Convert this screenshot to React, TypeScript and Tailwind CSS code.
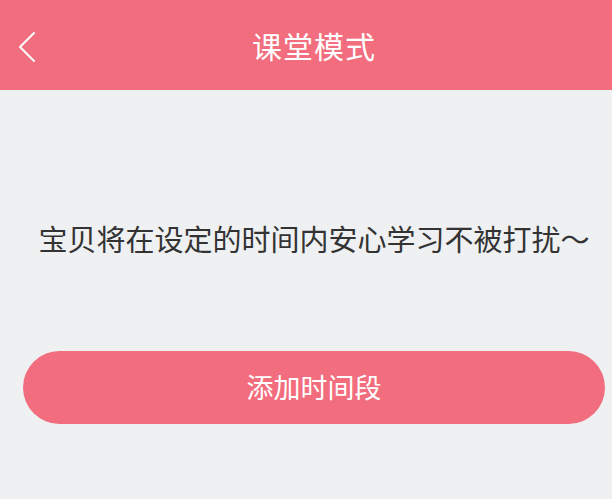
const font = { fontFamily: '"Noto Sans CJK SC", "Noto Sans", sans-serif' };

export default function App() {
  return (
    <div className="w-[612px] h-[499px] bg-[#eff0f2] overflow-hidden" style={font}>
      <header className="relative h-[90px] bg-[#f26d7d] flex items-center justify-center pl-4">
        <button className="absolute left-[14px] top-[30px] text-white">
          <svg width="28" height="34" viewBox="0 0 28 34" fill="none">
            <path d="M20 3 L6 17 L20 31" stroke="white" strokeWidth="2" strokeLinecap="round" strokeLinejoin="round" />
          </svg>
        </button>
        <h1 className="text-[30px] leading-none text-white tracking-[1px]">课堂模式</h1>
      </header>
      <main className="pl-4 flex flex-col">
        <p className="mt-[130px] text-center text-[29px] leading-[36px] text-[#333333] whitespace-nowrap">
          宝贝将在设定的时间内安心学习不被打扰～
        </p>
        <button className="mx-[7px] mt-[95px] h-[73px] rounded-full bg-[#f26d7d] text-white text-[27px]">
          添加时间段
        </button>
      </main>
    </div>
  );
}
